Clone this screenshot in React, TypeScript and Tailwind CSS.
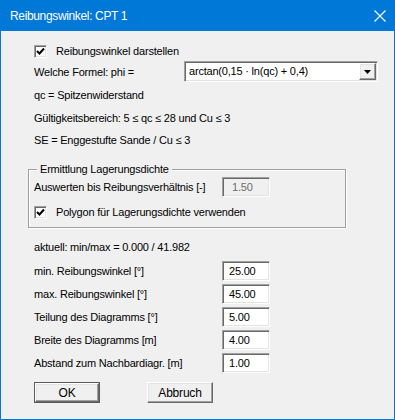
import React from 'react';

const sunken =
  'border border-t-[#a0a0a0] border-l-[#a0a0a0] border-b-white border-r-white shadow-[inset_1px_1px_0_#696969,inset_-1px_-1px_0_#e3e3e3]';

const raised =
  'border border-t-white border-l-white border-b-[#696969] border-r-[#696969] shadow-[inset_-1px_-1px_0_#a0a0a0,inset_1px_1px_0_#e3e3e3]';

const CheckBox: React.FC<{ label: string }> = ({ label }) => (
  <div className="flex items-center h-[20px]">
    <div className={`w-[13px] h-[13px] bg-white flex items-center justify-center ${sunken}`}>
      <svg width="9" height="9" viewBox="0 0 9 9">
        <path d="M1 4 L3.5 6.5 L8 1.5" stroke="#000" strokeWidth="2" fill="none" />
      </svg>
    </div>
    <span className="ml-[9px]">{label}</span>
  </div>
);

const Field: React.FC<{ label: string; value: string; disabled?: boolean }> = ({ label, value, disabled }) => (
  <div className="flex items-center h-[20px]">
    <span className="w-[188px]">{label}</span>
    <div
      className={`w-[48px] h-[20px] flex items-center pl-[6px] ${sunken} ${
        disabled ? 'bg-[#f0f0f0] text-[#6d6d6d] pl-[9px]' : 'bg-white'
      }`}
    >
      {value}
    </div>
  </div>
);

const TextRow: React.FC<{ children: React.ReactNode; className?: string }> = ({ children, className = '' }) => (
  <div className={`flex items-center h-[22px] ml-[33px] ${className}`}>{children}</div>
);

export default function App() {
  return (
    <div className="w-[395px] h-[420px] flex flex-col bg-[#0078d7] font-['Liberation_Sans',Arial,sans-serif] text-[11px] tracking-[-0.2px] text-black select-none">
      <div className="h-[31px] flex items-center justify-between pl-[10px] pr-[10px] text-white">
        <span className="text-[12px] tracking-[-0.35px]">Reibungswinkel: CPT 1</span>
        <svg width="12" height="12" viewBox="0 0 12 12" className="mr-[-1px]">
          <path d="M0.5 0.5 L11.5 11.5 M11.5 0.5 L0.5 11.5" stroke="#fff" strokeWidth="1.1" />
        </svg>
      </div>

      <div className="flex-1 mx-[1px] mb-[1px] bg-[#f0f0f0] pt-[10px] flex flex-col">
        <div className="ml-[33px]">
          <CheckBox label="Reibungswinkel darstellen" />
        </div>

        <div className="flex items-center h-[21px] ml-[33px]">
          <span className="w-[150px] pt-[2px]">Welche Formel: phi =</span>
          <div className={`w-[194px] h-[21px] bg-white flex items-center justify-between pl-[4px] pr-[1px] ${sunken}`}>
            <span>arctan(0,15 · ln(qc) + 0,4)</span>
            <div className={`w-[17px] h-[17px] bg-[#f0f0f0] flex items-center justify-center ${raised}`}>
              <svg width="7" height="4" viewBox="0 0 7 4">
                <path d="M0 0 H7 L3.5 4 Z" fill="#000" />
              </svg>
            </div>
          </div>
        </div>

        <TextRow className="mt-[2px]">qc = Spitzenwiderstand</TextRow>
        <TextRow className="mt-[1px]">Gültigkeitsbereich: 5 ≤ qc ≤ 28 und Cu ≤ 3</TextRow>
        <TextRow>SE = Enggestufte Sande / Cu ≤ 3</TextRow>

        <div className="relative ml-[27px] mt-[18px] w-[318px] border border-[#a0a0a0] shadow-[1px_1px_0_#fff,inset_1px_1px_0_#fff] pl-[5px] pt-[7px] pb-[5px]">
          <span className="absolute left-[8px] top-[-8px] bg-[#f0f0f0] px-[3px] leading-[15px]">
            Ermittlung Lagerungsdichte
          </span>
          <Field label="Auswerten bis Reibungsverhältnis [-]" value="1.50" disabled />
          <div className="mt-[5px]">
            <CheckBox label="Polygon für Lagerungsdichte verwenden" />
          </div>
        </div>

        <TextRow className="mt-[8px]">aktuell: min/max = 0.000 / 41.982</TextRow>

        <div className="ml-[33px] mt-[3px] flex flex-col gap-[3px]">
          <Field label="min. Reibungswinkel [°]" value="25.00" />
          <Field label="max. Reibungswinkel [°]" value="45.00" />
          <Field label="Teilung des Diagramms [°]" value="5.00" />
          <Field label="Breite des Diagramms [m]" value="4.00" />
          <Field label="Abstand zum Nachbardiagr. [m]" value="1.00" />
        </div>

        <div className="ml-[33px] mt-[9px] flex gap-[47px]">
          <button className="w-[66px] h-[21px] border border-[#5a5a5a] bg-[#f0f0f0] p-0">
            <div className={`w-full h-full flex items-center justify-center text-[12px] ${raised}`}>OK</div>
          </button>
          <button className={`w-[66px] h-[21px] bg-[#f0f0f0] flex items-center justify-center text-[12px] ${raised}`}>
            Abbruch
          </button>
        </div>
      </div>
    </div>
  );
}
